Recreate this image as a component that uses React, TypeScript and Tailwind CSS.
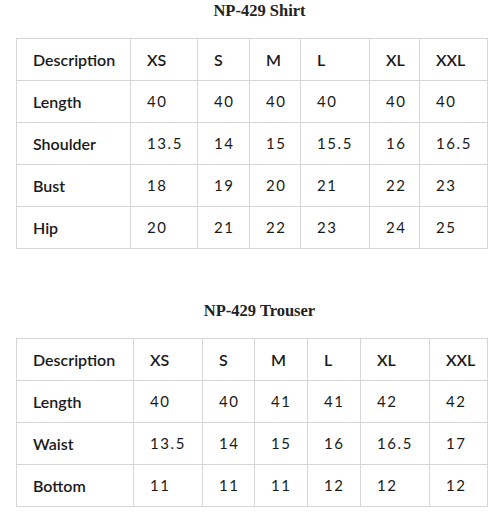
import React from 'react';

type Chart = {
  title: string;
  widths: number[];
  sizes: string[];
  rows: { label: string; values: string[] }[];
};

const charts: Chart[] = [
  {
    title: 'NP-429 Shirt',
    widths: [114, 67, 52, 51, 69, 50, 68],
    sizes: ['XS', 'S', 'M', 'L', 'XL', 'XXL'],
    rows: [
      { label: 'Length', values: ['40', '40', '40', '40', '40', '40'] },
      { label: 'Shoulder', values: ['13.5', '14', '15', '15.5', '16', '16.5'] },
      { label: 'Bust', values: ['18', '19', '20', '21', '22', '23'] },
      { label: 'Hip', values: ['20', '21', '22', '23', '24', '25'] },
    ],
  },
  {
    title: 'NP-429 Trouser',
    widths: [117, 69, 52, 53, 53, 69, 58],
    sizes: ['XS', 'S', 'M', 'L', 'XL', 'XXL'],
    rows: [
      { label: 'Length', values: ['40', '40', '41', '41', '42', '42'] },
      { label: 'Waist', values: ['13.5', '14', '15', '16', '16.5', '17'] },
      { label: 'Bottom', values: ['11', '11', '11', '12', '12', '12'] },
    ],
  },
];

const SizeTable: React.FC<{ chart: Chart }> = ({ chart }) => (
  <div>
    <h2 className="text-center text-[16.5px] leading-[22px] font-bold text-[#222] [font-family:'Liberation_Serif',serif] mb-4">
      {chart.title}
    </h2>
    <table className="table-fixed border-collapse w-[471px] text-[#1a1a1a] [font-family:Lato,sans-serif]">
      <colgroup>
        {chart.widths.map((w, i) => (
          <col key={i} style={{ width: w }} />
        ))}
      </colgroup>
      <tbody>
        <tr className="h-[42px]">
          <td className="border border-[#d6d6d6] pl-4 text-[16px] font-semibold">Description</td>
          {chart.sizes.map((s) => (
            <td key={s} className="border border-[#d6d6d6] pl-4 text-[16px] font-semibold">
              {s}
            </td>
          ))}
        </tr>
        {chart.rows.map((row) => (
          <tr key={row.label} className="h-[42px]">
            <td className="border border-[#d6d6d6] pl-4 text-[16px] font-semibold">{row.label}</td>
            {row.values.map((v, i) => (
              <td key={i} className="border border-[#d6d6d6] pl-4 text-[15px] tracking-[1.6px]">
                {v}
              </td>
            ))}
          </tr>
        ))}
      </tbody>
    </table>
  </div>
);

export default function App() {
  return (
    <div className="w-[503px] h-[521px] bg-white pl-4 flex flex-col">
      <SizeTable chart={charts[0]} />
      <div className="mt-[51px]">
        <SizeTable chart={charts[1]} />
      </div>
    </div>
  );
}
